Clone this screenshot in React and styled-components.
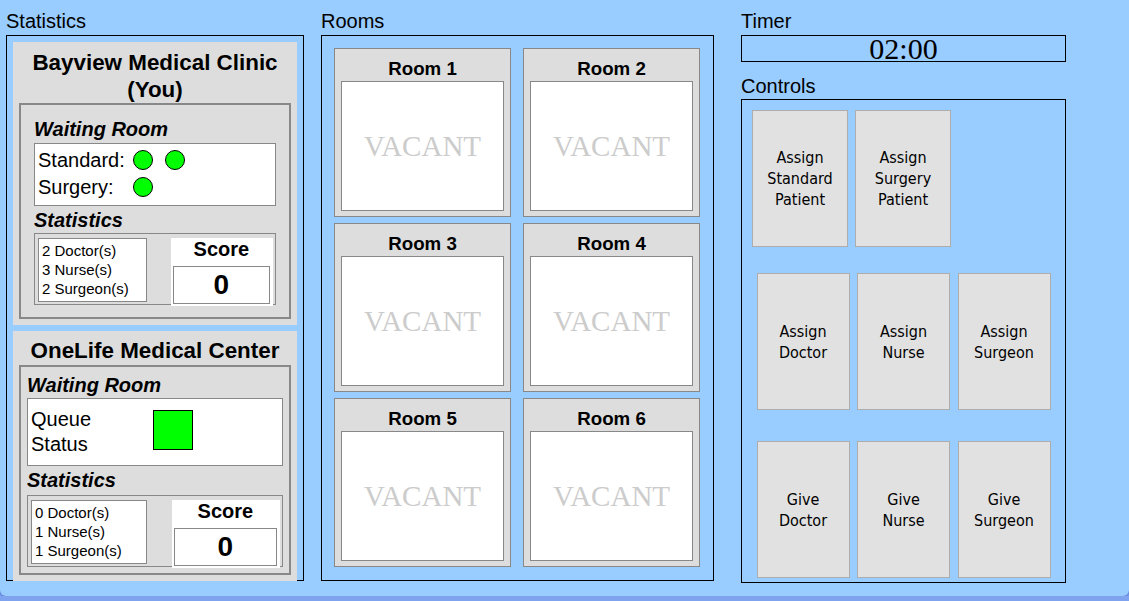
import React from 'react';
import styled, { createGlobalStyle } from 'styled-components';

const GlobalStyle = createGlobalStyle`
  html, body { margin: 0; padding: 0; background: #7fa3ef; }
  body { font-family: "Liberation Sans", Arial, sans-serif; color: #000; }
  * { box-sizing: border-box; }
`;

const Page = styled.div`
  height: 596px;
  background: #99ccff;
  border-radius: 0 0 6px 6px;
  box-shadow: 0 1px 3px rgba(40, 60, 170, 0.55);
  padding: 10px 0 0 6px;
  display: flex;
  align-items: flex-start;
`;

const Column = styled.section`
  width: ${(p) => p.$w}px;
  margin-left: ${(p) => p.$ml || 0}px;
  display: flex;
  flex-direction: column;
`;

const SectionLabel = styled.div`
  font-size: 20px;
  line-height: 23px;
  height: 23px;
  margin: ${(p) => p.$mt || 0}px 0 ${(p) => (p.$mb === undefined ? 2 : p.$mb)}px;
`;

/* ---------- Statistics ---------- */
const StatsBox = styled.div`
  height: 546px;
  border: 1px solid #000;
  padding: 6px;
  display: flex;
  flex-direction: column;
  gap: 6px;
`;

const HospitalPanel = styled.div`
  background: #dddddd;
  padding: ${(p) => p.$pad || '6px'};
`;

const HospitalName = styled.h2`
  margin: 0 0 ${(p) => p.$mb || 0}px;
  font-size: 22.4px;
  line-height: 27px;
  font-weight: bold;
  text-align: center;
`;

const HospitalBody = styled.div`
  border: 2px solid #888;
  padding: ${(p) => p.$pad};
`;

const SubHeading = styled.h3`
  margin: ${(p) => p.$mt || 0}px 0 ${(p) => p.$mb || 0}px;
  font-size: 20px;
  line-height: 23px;
  font-weight: bold;
  font-style: italic;
`;

const WaitingBox = styled.div`
  background: #fff;
  border: 1px solid #888;
  padding: ${(p) => p.$pad};
  display: flex;
  flex-direction: ${(p) => (p.$row ? 'row' : 'column')};
  align-items: ${(p) => (p.$row ? 'center' : 'stretch')};
`;

const PatientRow = styled.div`
  display: flex;
  align-items: center;
  height: 27px;
  font-size: 20px;
  line-height: 23px;
  padding-top: 2px;
`;

const RowLabel = styled.span`
  width: 95px;
  flex: none;
`;

const Dot = styled.span`
  width: 20px;
  height: 20px;
  border-radius: 50%;
  background: #00ff00;
  border: 1px solid #000;
  margin-right: 12px;
  margin-top: -2px;
  flex: none;
`;

const QueueLabel = styled.div`
  width: 122px;
  font-size: 20px;
  line-height: 25px;
  flex: none;
`;

const QueueSquare = styled.div`
  width: 40px;
  height: 40px;
  background: #00ff00;
  border: 1px solid #000;
  margin-bottom: 4px;
`;

const StatBox = styled.div`
  height: 72px;
  border: 1px solid #888;
  padding: 4px 2px 0 3px;
  display: flex;
  align-items: flex-start;
  justify-content: space-between;
`;

const StaffList = styled.div`
  width: 46.5%;
  height: 64px;
  background: #fff;
  border: 1px solid #888;
  padding: 3px 3px 0;
  font-size: 15px;
  line-height: 18.75px;
`;

const ScorePanel = styled.div`
  width: 43.5%;
  background: #fff;
  padding: 0 3px 2px 2px;
  text-align: center;
`;

const ScoreTitle = styled.div`
  font-size: 20px;
  line-height: 23px;
  font-weight: bold;
`;

const ScoreValue = styled.div`
  margin-top: 5px;
  height: 38px;
  border: 1px solid #888;
  font-size: 28px;
  line-height: 36px;
  font-weight: bold;
`;

/* ---------- Rooms ---------- */
const RoomsBox = styled.div`
  height: 546px;
  border: 1px solid #000;
  padding: 12px;
  display: grid;
  grid-template-columns: 177px 177px;
  grid-auto-rows: 169px;
  column-gap: 12px;
  row-gap: 6px;
`;

const RoomCard = styled.div`
  background: #dddddd;
  border: 1px solid #888;
  padding: 9px 6px 5px;
  display: flex;
  flex-direction: column;
`;

const RoomTitle = styled.h3`
  margin: 0 0 1px;
  font-size: 18.72px;
  line-height: 22px;
  font-weight: bold;
  text-align: center;
`;

const RoomSlot = styled.div`
  flex: 1;
  background: #fff;
  border: 1px solid #888;
  display: flex;
  align-items: center;
  justify-content: center;
  font-family: "Liberation Serif", "Times New Roman", serif;
  font-size: 29px;
  color: #cccccc;
`;

/* ---------- Timer & Controls ---------- */
const TimerBox = styled.div`
  height: 27px;
  border: 1px solid #000;
  text-align: center;
  font-family: "Liberation Serif", "Times New Roman", serif;
  font-size: 30px;
  line-height: 25px;
`;

const ControlsBox = styled.div`
  border: 1px solid #000;
  padding: 10px 0 4px;
  display: flex;
  flex-direction: column;
`;

const ButtonRow = styled.div`
  display: flex;
  gap: ${(p) => p.$gap}px;
  justify-content: ${(p) => (p.$center ? 'center' : 'flex-start')};
  padding-left: ${(p) => p.$pl || 0}px;
  margin-top: ${(p) => p.$mt || 0}px;
`;

const ControlButton = styled.button`
  width: ${(p) => p.$w}px;
  height: 137px;
  padding: 0;
  background: #e1e1e1;
  border: 1px solid #adadad;
  border-radius: 0;
  color: #000;
  font-family: "DejaVu Sans Condensed", "DejaVu Sans", sans-serif;
  font-stretch: condensed;
  font-size: 16px;
  line-height: 21px;
  text-align: center;
  display: flex;
  align-items: center;
  justify-content: center;
`;

const ButtonText = styled.span`
  display: block;
`;

const rooms = [1, 2, 3, 4, 5, 6];

const Btn = ({ lines, w }) => (
  <ControlButton $w={w}>
    <ButtonText>
      {lines.map((l, i) => (
        <React.Fragment key={i}>
          {i > 0 && <br />}
          {l}
        </React.Fragment>
      ))}
    </ButtonText>
  </ControlButton>
);

const Staff = ({ d, n, s }) => (
  <StaffList>
    <div>{d} Doctor(s)</div>
    <div>{n} Nurse(s)</div>
    <div>{s} Surgeon(s)</div>
  </StaffList>
);

const Score = ({ value }) => (
  <ScorePanel>
    <ScoreTitle>Score</ScoreTitle>
    <ScoreValue>{value}</ScoreValue>
  </ScorePanel>
);

export default function App() {
  return (
    <>
      <GlobalStyle />
      <Page>
        <Column $w={298}>
          <SectionLabel>Statistics</SectionLabel>
          <StatsBox>
            <HospitalPanel $pad="7px 6px 6px">
              <HospitalName>Bayview Medical Clinic (You)</HospitalName>
              <HospitalBody $pad="13px 13px 12px">
                <SubHeading $mb={2}>Waiting Room</SubHeading>
                <WaitingBox $pad="2px 4px 5px 3px">
                  <PatientRow>
                    <RowLabel>Standard:</RowLabel>
                    <Dot />
                    <Dot />
                  </PatientRow>
                  <PatientRow>
                    <RowLabel>Surgery:</RowLabel>
                    <Dot />
                  </PatientRow>
                </WaitingBox>
                <SubHeading $mt={3} $mb={1}>Statistics</SubHeading>
                <StatBox>
                  <Staff d={2} n={3} s={2} />
                  <Score value={0} />
                </StatBox>
              </HospitalBody>
            </HospitalPanel>
            <HospitalPanel>
              <HospitalName $mb={1}>OneLife Medical Center</HospitalName>
              <HospitalBody $pad="7px 6px 6px">
                <SubHeading $mb={1}>Waiting Room</SubHeading>
                <WaitingBox $row $pad="8px 3px">
                  <QueueLabel>
                    Queue
                    <br />
                    Status
                  </QueueLabel>
                  <QueueSquare />
                </WaitingBox>
                <SubHeading $mt={3} $mb={3}>Statistics</SubHeading>
                <StatBox>
                  <Staff d={0} n={1} s={1} />
                  <Score value={0} />
                </StatBox>
              </HospitalBody>
            </HospitalPanel>
          </StatsBox>
        </Column>

        <Column $w={393} $ml={17}>
          <SectionLabel>Rooms</SectionLabel>
          <RoomsBox>
            {rooms.map((r) => (
              <RoomCard key={r}>
                <RoomTitle>Room {r}</RoomTitle>
                <RoomSlot>VACANT</RoomSlot>
              </RoomCard>
            ))}
          </RoomsBox>
        </Column>

        <Column $w={325} $ml={27}>
          <SectionLabel>Timer</SectionLabel>
          <TimerBox>02:00</TimerBox>
          <SectionLabel $mt={13} $mb={1}>Controls</SectionLabel>
          <ControlsBox>
            <ButtonRow $gap={7} $pl={10}>
              <Btn w={96} lines={['Assign', 'Standard', 'Patient']} />
              <Btn w={96} lines={['Assign', 'Surgery', 'Patient']} />
            </ButtonRow>
            <ButtonRow $gap={7.5} $center $mt={26}>
              <Btn w={93} lines={['Assign', 'Doctor']} />
              <Btn w={93} lines={['Assign', 'Nurse']} />
              <Btn w={93} lines={['Assign', 'Surgeon']} />
            </ButtonRow>
            <ButtonRow $gap={7.5} $center $mt={31}>
              <Btn w={93} lines={['Give', 'Doctor']} />
              <Btn w={93} lines={['Give', 'Nurse']} />
              <Btn w={93} lines={['Give', 'Surgeon']} />
            </ButtonRow>
          </ControlsBox>
        </Column>
      </Page>
    </>
  );
}
